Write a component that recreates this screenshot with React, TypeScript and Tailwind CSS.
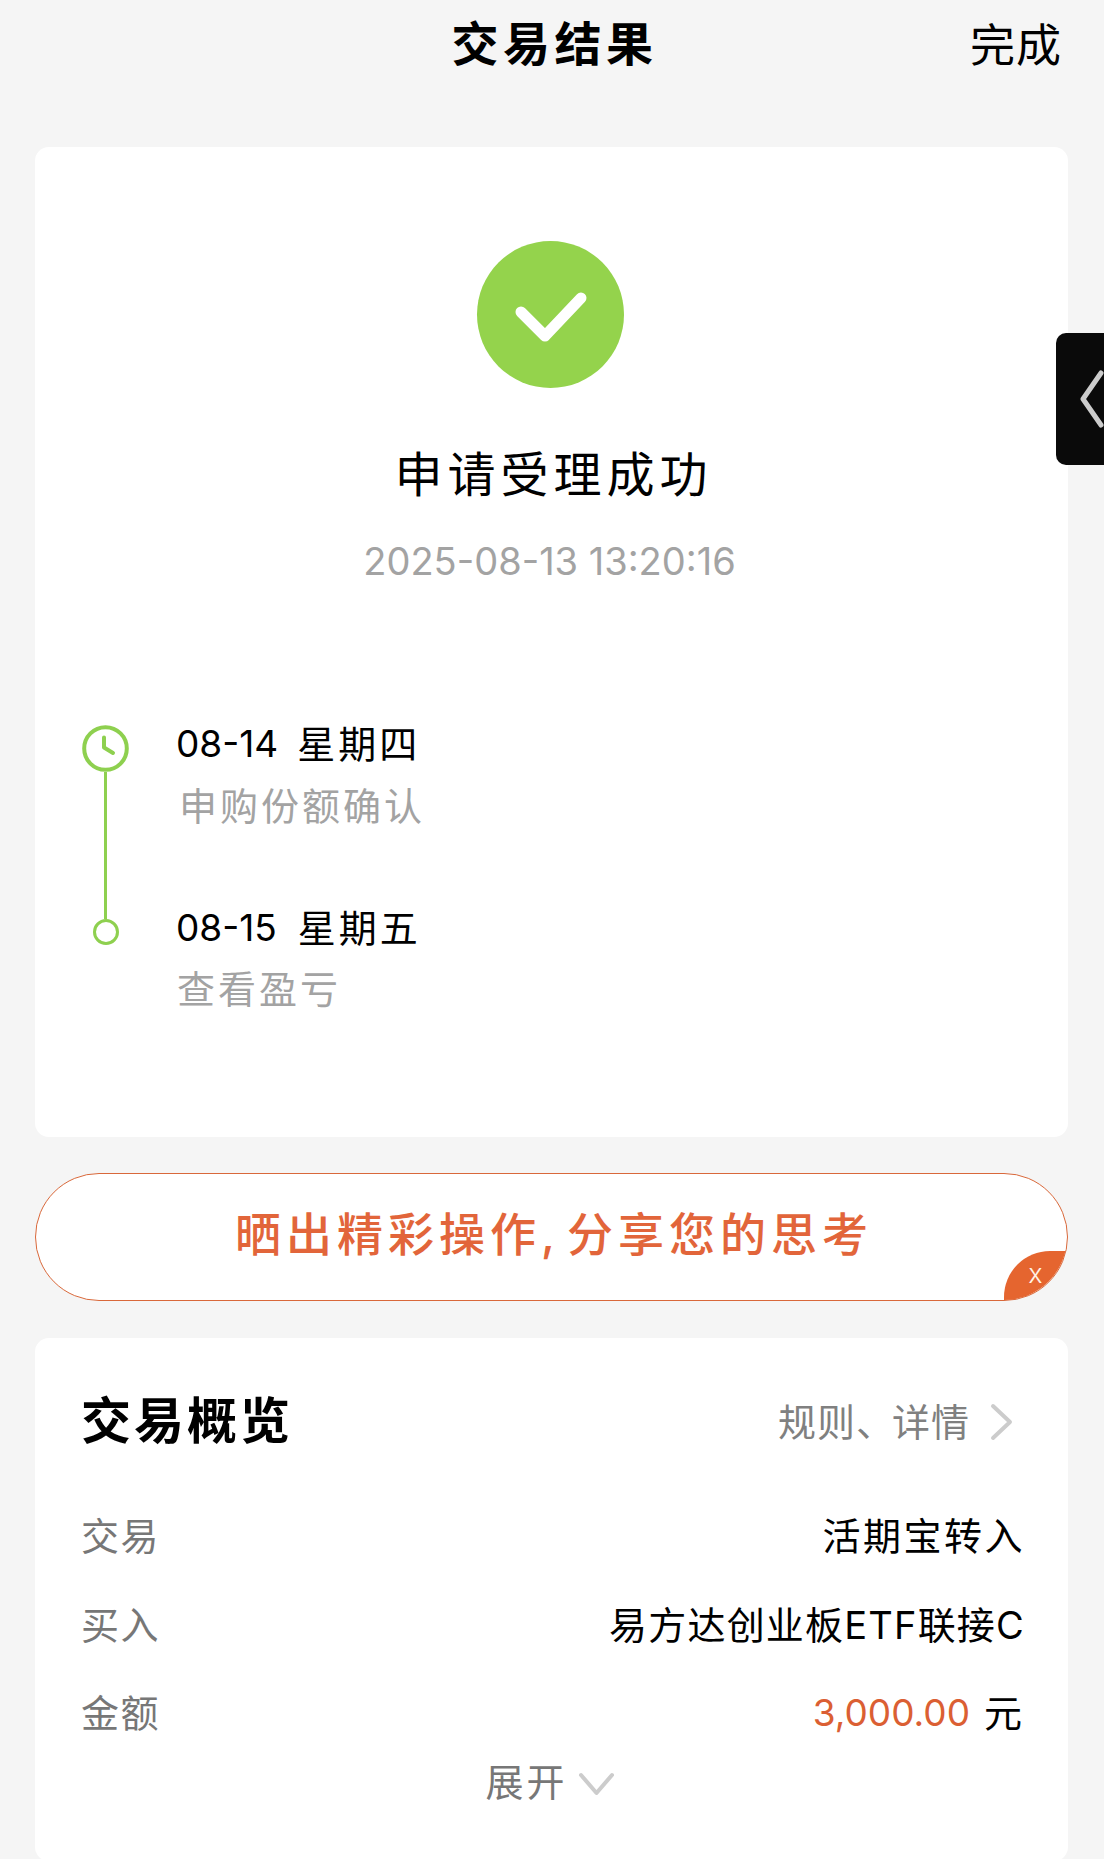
const FONT = "font-['Inter','Noto_Sans_CJK_SC',sans-serif]";

function Chevron({ className, d, box }: { className: string; d: string; box: string }) {
  return (
    <svg className={className} viewBox={box} fill="none" stroke="currentColor" strokeWidth="4" strokeLinecap="round" strokeLinejoin="round">
      <path d={d} />
    </svg>
  );
}

function OverviewRow({ label, children }: { label: string; children: React.ReactNode }) {
  return (
    <div className="flex h-[50px] items-center justify-between leading-[50px]">
      <span className="text-[38px] tracking-[1.5px] text-[#777777]">{label}</span>
      {children}
    </div>
  );
}

export default function App() {
  return (
    <div className={`${FONT} relative h-[1859px] w-[1104px] overflow-hidden bg-[#f5f5f5] text-black`}>
      <header className="grid h-[147px] grid-cols-[1fr_auto_1fr] pt-[14px]">
        <div />
        <h1 className="ml-[5px] text-[47px] leading-[60px] font-bold tracking-[4.5px]">交易结果</h1>
        <div className="pr-[42px] text-right text-[45px] leading-[64px] tracking-[1px]">完成</div>
      </header>

      <section className="mr-[36px] ml-[35px] flex h-[990px] flex-col items-center rounded-[14px] bg-white pt-[94px]">
        <div className="mr-[3px] h-[147px] w-[147px] rounded-full bg-[#94d34c]">
          <svg viewBox="0 0 147 147" className="h-full w-full" fill="none" stroke="#ffffff" strokeWidth="11" strokeLinecap="round" strokeLinejoin="round">
            <path d="M44 71L68 95L104 57" />
          </svg>
        </div>
        <div className="mt-[57px] ml-[4px] text-[48px] leading-[60px] tracking-[5px]">申请受理成功</div>
        <div className="mt-[34px] mr-[4px] text-[38px] leading-[44px] text-[#a3a3a3]">2025-08-13 13:20:16</div>

        <div className="mt-[136px] flex self-stretch pl-[47px]">
          <div className="mt-[6px] flex w-[47px] flex-col items-center">
            <div className="h-[47px] w-[47px] shrink-0">
              <svg viewBox="0 0 47 47" className="h-full w-full" fill="none" stroke="#8ed04f" strokeLinecap="round" strokeLinejoin="round">
                <circle cx="23.5" cy="23.5" r="21.3" strokeWidth="4" />
                <path d="M22 12.5V22.5L31 28" strokeWidth="4" />
              </svg>
            </div>
            <div className="h-[147px] w-[3px] bg-[#8ed04f]" />
            <div className="h-[26px] w-[26px] shrink-0 rounded-full border-[3px] border-[#8ed04f]" />
          </div>
          <div className="ml-[47px]">
            <div className="flex text-[37px] leading-[50px]">
              <span>08-14</span>
              <span className="ml-[19px] text-[38px] tracking-[3px]">星期四</span>
            </div>
            <div className="mt-[12px] ml-[3px] text-[38px] leading-[50px] tracking-[3px] text-[#a3a3a3]">申购份额确认</div>
            <div className="mt-[72px] flex text-[37px] leading-[50px]">
              <span>08-15</span>
              <span className="ml-[21px] text-[38px] tracking-[3px]">星期五</span>
            </div>
            <div className="mt-[11px] ml-[1px] text-[38px] leading-[50px] tracking-[3px] text-[#a3a3a3]">查看盈亏</div>
          </div>
        </div>
      </section>

      <div className="relative mt-[36px] mr-[36px] ml-[35px] flex h-[128px] items-center justify-center overflow-hidden rounded-full border border-[#d9683a] bg-white pb-[7px] pl-[5px]">
        <span className="text-[46px] leading-[60px] font-medium tracking-[5px] text-[#e2653a]">
          晒出精彩操作<span className="mr-[7px]">,</span>分享您的思考
        </span>
        <div className="absolute right-0 bottom-0 flex h-[49px] w-[63px] items-center justify-center rounded-tl-[46px] bg-[#e5652f] pb-[4px] text-[27px] leading-none font-light text-[#fff3e6]">
          x
        </div>
      </div>

      <section className="mt-[37px] mr-[36px] ml-[35px] h-[523px] rounded-[14px] bg-white pt-[53px] pr-[43px] pl-[46px]">
        <div className="flex h-[60px] items-center justify-between">
          <h2 className="text-[50px] leading-[60px] font-bold tracking-[3px]">交易概览</h2>
          <div className="flex items-center pt-[2px] pr-[11px]">
            <span className="text-[38px] leading-[50px] tracking-[1px] text-[#808080]">
              规则<span className="tracking-[-2px]">、</span>详情
            </span>
            <Chevron className="ml-[19px] h-[38px] w-[25px] text-[#cccccc]" box="0 0 25 38" d="M4 3L21 19L4 35" />
          </div>
        </div>
        <div className="mt-[60px]">
          <OverviewRow label="交易">
            <span className="text-[38px] tracking-[2.5px]">活期宝转入</span>
          </OverviewRow>
          <div className="mt-[39px]">
            <OverviewRow label="买入">
              <span className="text-[38px] tracking-[1.2px]">易方达创业板ETF联接C</span>
            </OverviewRow>
          </div>
          <div className="mt-[38px]">
            <OverviewRow label="金额">
              <span className="mr-[3px] flex items-center text-[38px]">
                <span className="text-[37px] text-[#db5f33]">3,000.00</span>
                <span className="ml-[14px]">元</span>
              </span>
            </OverviewRow>
          </div>
        </div>
        <div className="mt-[19px] flex h-[50px] items-center justify-center pr-[6px]">
          <span className="text-[38px] leading-[50px] tracking-[3px] text-[#777777]">展开</span>
          <Chevron className="mt-[4px] ml-[10px] h-[24px] w-[37px] text-[#cccccc]" box="0 0 37 24" d="M3 3L18.5 21L34 3" />
        </div>
      </section>

      <div className="absolute top-[333px] right-0 flex h-[132px] w-[48px] items-center justify-end rounded-l-[10px] bg-[#0a0a0a]">
        <svg viewBox="0 0 24 58" className="h-[58px] w-[24px]" fill="none" stroke="#cccccc" strokeWidth="5" strokeLinecap="round" strokeLinejoin="round">
          <path d="M21 3L3 29L21 55" />
        </svg>
      </div>
    </div>
  );
}
